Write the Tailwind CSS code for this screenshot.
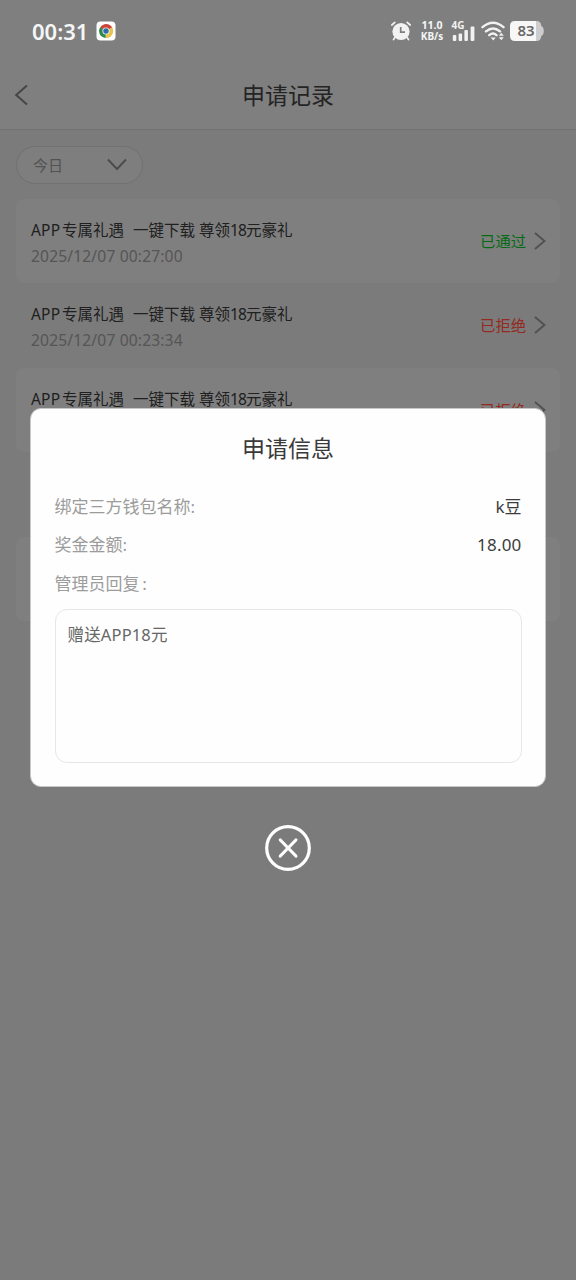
<!DOCTYPE html>
<html lang="zh-CN">
<head>
<meta charset="utf-8">
<title>申请记录</title>
<script src="https://cdn.jsdelivr.net/npm/@tailwindcss/browser@4"></script>
</head>
<body class="w-[576px] h-[1280px] overflow-hidden bg-[#7b7b7b] font-['Noto_Sans','Noto_Sans_CJK_SC',sans-serif] whitespace-nowrap">
<header class="h-[130px] bg-[#7f7f7f] border-b border-[#717171]">
  <div class="h-[62px] pl-8 pr-8 flex items-center text-[#f6f6f6]">
    <span class="w-[64px] text-[22px] leading-[62px] font-semibold tracking-[0px]">00:31</span>
    <svg class="w-[20px] h-[20px]" viewBox="0 0 20 20"><rect x=".5" y=".5" width="19" height="19" rx="4" fill="#fff"/><path d="M10 10 4.2 6.4A7 7 0 0 1 16.2 6.5z" fill="#cf4437"/><path d="M10 10 16.2 6.5A7 7 0 0 1 9.6 17z" fill="#e8c54a"/><path d="M10 10 9.6 17A7 7 0 0 1 4.2 6.2z" fill="#2d8a4c"/><circle cx="10" cy="10" r="3.6" fill="#e9efe9"/><circle cx="10" cy="10" r="2.7" fill="#2f6cb0"/></svg>
    <svg class="w-[22px] h-[22px] ml-[274px]" viewBox="0 0 22 22"><circle cx="11" cy="11.5" r="8.6" fill="#f2f2f2"/><path d="M1.8 5 4.8 2.3M20.2 5 17.2 2.3M4.8 17.5 3.5 19.6M17.2 17.5 18.5 19.6" stroke="#f2f2f2" stroke-width="1.7" stroke-linecap="round"/><path d="M10.7 7v5.2h4.3" fill="none" stroke="#7f7f7f" stroke-width="1.7"/></svg>
    <div class="w-[26px] ml-[7px] text-center text-[10.5px] leading-[11px] font-bold"><div>11.0</div><div class="text-[10px]">KB/s</div></div>
    <svg class="w-[25px] h-[22px] ml-[6px] overflow-visible" viewBox="0 0 25 22"><text x="0.5" y="9" font-size="10" font-weight="700" fill="#f2f2f2">4G</text><g fill="#f2f2f2"><rect x="1.8" y="15" width="3.5" height="6" rx="1"/><rect x="7.6" y="13.5" width="3.5" height="7.5" rx="1"/><rect x="13.4" y="10" width="3.5" height="11" rx="1"/><rect x="19.6" y="6.5" width="3.8" height="14.5" rx="1"/></g></svg>
    <svg class="w-[25px] h-[22px] ml-[5px]" viewBox="0 0 25 22"><g fill="none" stroke="#f2f2f2" stroke-width="2.4" stroke-linecap="round"><path d="M1.5 7.2Q12 -1.8 22.5 7.2M5 11.4Q12 5.4 19 11.4M8.3 15.2Q12 12 15.5 15.2"/></g><path d="M9.7 17.5h5L12.2 20.5z" fill="#f2f2f2"/><path d="m17.8 15.7 2.5-3 2.5 3zM17.8 17.2l2.5 3 2.5-3z" fill="#f2f2f2"/></svg>
    <svg class="w-[34px] h-[20px] ml-[4px] shrink-0" viewBox="0 0 34 20"><path d="M5 0H26V20H5Q0 20 0 15V5Q0 0 5 0" fill="#f7f7f7"/><path d="M26 0h.5Q31 0 31.3 5Q33.8 6 33.8 10T31.3 15Q31 20 26.5 20H26z" fill="#cdcdcd"/><text x="16" y="15.4" text-anchor="middle" font-size="15" font-weight="600" fill="#686868">83</text></svg>
  </div>
  <div class="h-[67px] grid grid-cols-[60px_1fr_60px] items-center">
    <svg class="w-[14px] h-[22px] ml-[14px] mb-[2px]" viewBox="0 0 14 22"><path d="M13 1.5 2.2 11 13 20.5" fill="none" stroke="#464646" stroke-width="2"/></svg>
    <h1 class="text-center text-[23px] leading-[67px] text-[#242424]">申请记录</h1>
  </div>
</header>
<main class="pt-[15.5px] px-4">
  <div class="w-[127px] h-[38px] rounded-full border-[1.5px] border-[#717171] bg-[#7e7e7e] flex items-center justify-between pl-4 pr-[15px] text-[15px] text-[#525252]">
    <span class="pt-px">今日</span>
    <svg class="w-[20px] h-[13px]" viewBox="0 0 20 13"><path d="m1 1.5 9 9.5 9-9.5" fill="none" stroke="#4c4c4c" stroke-width="2"/></svg>
  </div>
  <div id="list" class="mt-[15.2px]"></div>
</main>
<template id="row">
  <div class="h-[84.5px] rounded-[8px] flex justify-between pl-[15px] pr-[14px] even:bg-transparent odd:bg-[#7f7f7f]">
    <div class="pt-[19px]">
      <div class="flex text-[15.5px] leading-[24px] text-[#202020]"><span class="w-[31px] tracking-[0.2px]">APP</span><span class="w-[71px]">专属礼遇</span><span class="w-[66px]">一键下载</span><span class="w-[31px]">尊领</span><span class="w-[16px] tracking-[-0.9px]">18</span><span>元豪礼</span></div>
      <div class="mt-[1px] text-[15.6px] leading-[26px] tracking-[0.15px] text-[#555]" data-time></div>
    </div>
    <div class="flex items-center gap-[8px] text-[15.3px]"><span data-status></span><svg class="w-[12px] h-[18px]" viewBox="0 0 12 18"><path d="m1 1 9.5 8L1 17" fill="none" stroke="#505050" stroke-width="1.8"/></svg></div>
  </div>
</template>
<div class="fixed inset-0 pt-[408px] flex flex-col items-center">
  <section class="w-[516px] h-[379px] rounded-[11px] bg-[#fefefe] border border-[#c8c8c8] px-[23.5px] pt-[20px]">
    <h2 class="text-center text-[23px] leading-[38px] text-[#3a3a3a]">申请信息</h2>
    <div class="mt-[20.5px] text-[17px] leading-[38.6px] text-[#9c9c9c]">
      <div class="flex justify-between"><span>绑定三方钱包名称:</span><span class="text-[#3c3c3c]">k豆</span></div>
      <div class="flex justify-between"><span>奖金金额:</span><span class="text-[#3c3c3c] tracking-[0.2px]">18.00</span></div>
      <div>管理员回复&thinsp;:</div>
    </div>
    <div class="mt-[5.5px] h-[154px] rounded-[12px] border border-[#e6e6e6] px-[12px] pt-[11px] text-[16.5px] leading-[28px] tracking-[0.15px] text-[#666]">赠送APP18元</div>
  </section>
  <svg class="mt-[38px] w-[46px] h-[46px]" viewBox="0 0 46 46" fill="none" stroke="#fff"><circle cx="23" cy="23" r="21.3" stroke-width="3.2"/><path d="m15.3 15 15.6 16M30.9 15 15.3 31" stroke-width="3.2" stroke-linecap="round"/></svg>
</div>
<script>
const rows = [['2025/12/07 00:27:00', '已通过'], ['2025/12/07 00:23:34', '已拒绝'], ['', '已拒绝'], ['', ''], ['', '']];
for (const [time, state] of rows) {
  const node = document.getElementById('row').content.cloneNode(true);
  node.querySelector('[data-time]').textContent = time;
  const status = node.querySelector('[data-status]');
  status.textContent = state;
  status.className = state === '已通过' ? 'pt-px text-[#046a14]' : 'pt-px text-[#93291f]';
  if (!state) node.firstElementChild.replaceChildren();
  document.getElementById('list').append(node);
}
</script>
</body>
</html>
